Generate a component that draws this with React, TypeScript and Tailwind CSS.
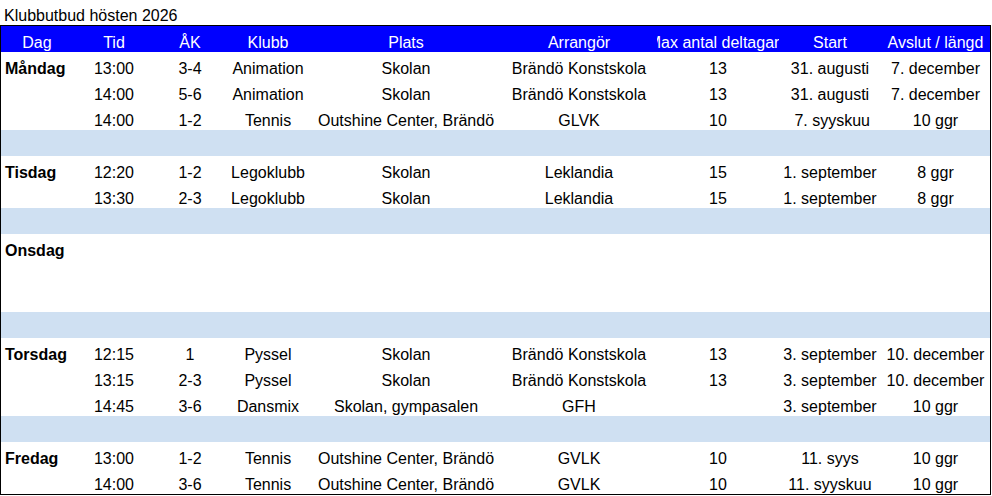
import React from "react";

type Row = { day?: string; cells?: string[]; band?: boolean };

const rows: Row[] = [
  { day: "Måndag", cells: ["13:00", "3-4", "Animation", "Skolan", "Brändö Konstskola", "13", "31. augusti", "7. december"] },
  { cells: ["14:00", "5-6", "Animation", "Skolan", "Brändö Konstskola", "13", "31. augusti", "7. december"] },
  { cells: ["14:00", "1-2", "Tennis", "Outshine Center, Brändö", "GLVK", "10", " 7. syyskuu", "10 ggr"] },
  { band: true },
  { day: "Tisdag", cells: ["12:20", "1-2", "Legoklubb", "Skolan", "Leklandia", "15", "1. september", "8 ggr"] },
  { cells: ["13:30", "2-3", "Legoklubb", "Skolan", "Leklandia", "15", "1. september", "8 ggr"] },
  { band: true },
  { day: "Onsdag", cells: ["", "", "", "", "", "", "", ""] },
  { cells: ["", "", "", "", "", "", "", ""] },
  { cells: ["", "", "", "", "", "", "", ""] },
  { band: true },
  { day: "Torsdag", cells: ["12:15", "1", "Pyssel", "Skolan", "Brändö Konstskola", "13", "3. september", "10. december"] },
  { cells: ["13:15", "2-3", "Pyssel", "Skolan", "Brändö Konstskola", "13", "3. september", "10. december"] },
  { cells: ["14:45", "3-6", "Dansmix", "Skolan, gympasalen", "GFH", "", "3. september", "10 ggr"] },
  { band: true },
  { day: "Fredag", cells: ["13:00", "1-2", "Tennis", "Outshine Center, Brändö", "GVLK", "10", "11. syys", "10 ggr"] },
  { cells: ["14:00", "3-6", "Tennis", "Outshine Center, Brändö", "GVLK", "10", "11. syyskuu", "10 ggr"] },
];

const headers = ["Tid", "ÅK", "Klubb", "Plats", "Arrangör", "Max antal deltagare", "Start", "Avslut / längd"];

const grid = "grid grid-cols-[72px_82px_70px_86px_190px_156px_122px_102px_109px]";

export default function App() {
  return (
    <div
      className="w-[992px] h-[496px] bg-white text-black overflow-hidden text-[16px]"
      style={{ fontFamily: '"Liberation Sans", Arial, sans-serif' }}
    >
      <div className="h-[25px] pl-[4px] pt-[7px] leading-[18px] whitespace-nowrap">Klubbutbud hösten 2026</div>
      <div className="w-[991px] border border-black">
        <div className={`${grid} h-[26px] bg-[#0000ff] text-white`}>
          <div className="flex justify-center overflow-hidden whitespace-nowrap pt-[8px] leading-[18px]">Dag</div>
          {headers.map((h, i) => (
            <div key={i} className="flex justify-center overflow-hidden whitespace-nowrap pt-[8px] leading-[18px]">
              {h}
            </div>
          ))}
        </div>
        {rows.map((r, ri) =>
          r.band ? (
            <div key={ri} className="h-[26px] bg-[#cfe0f2]" />
          ) : (
            <div key={ri} className={`${grid} h-[26px]`}>
              <div className="flex justify-start overflow-hidden whitespace-nowrap pl-[4px] pt-[8px] leading-[18px] font-bold">
                {r.day ?? ""}
              </div>
              {r.cells!.map((c, ci) => (
                <div
                  key={ci}
                  className="flex justify-center overflow-hidden whitespace-pre pt-[8px] leading-[18px]"
                >
                  {c}
                </div>
              ))}
            </div>
          )
        )}
      </div>
    </div>
  );
}
